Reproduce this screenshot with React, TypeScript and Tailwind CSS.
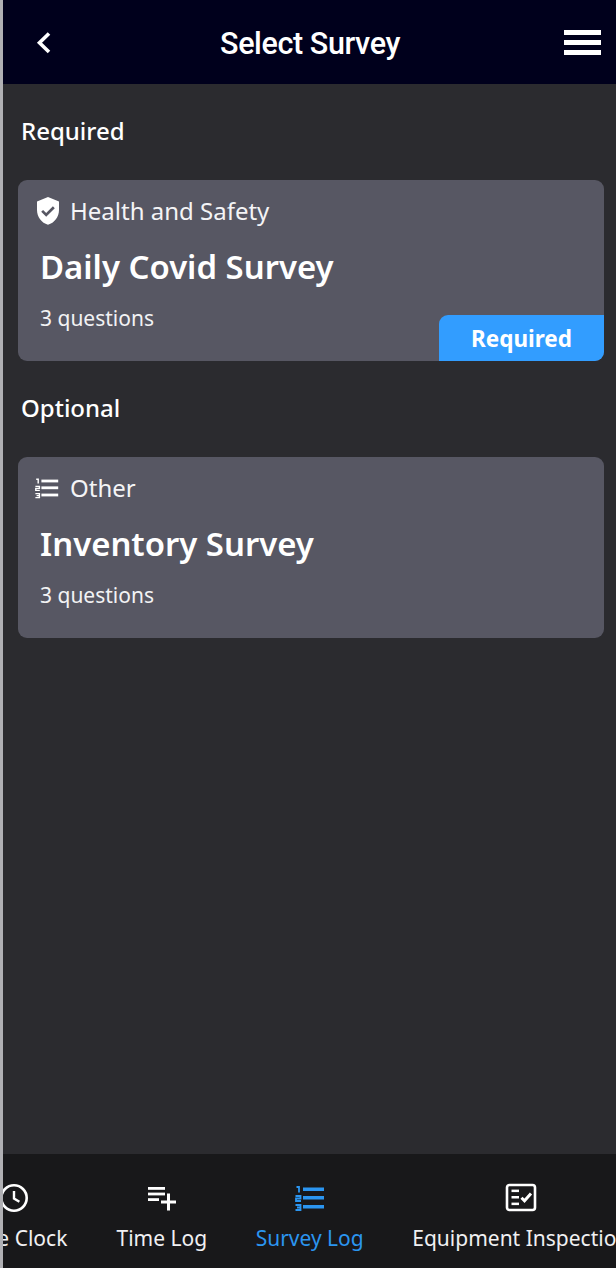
import React from "react";

const sans = "font-['Noto_Sans',sans-serif]";

function ShieldCheck() {
  return (
    <svg width="24" height="30" viewBox="0 0 24 30" className="block">
      <path
        fillRule="evenodd"
        fill="#fff"
        d="M12 1 L1 5.4 V14 C1 21 5.6 26.8 12 28.8 C18.4 26.8 23 21 23 14 V5.4 Z M10.2 20.8 L5.2 15.8 L7.1 13.9 L10.2 17 L16.9 10.3 L18.8 12.2 Z"
      />
    </svg>
  );
}

function NumberedList({ color, size, className }: { color: string; size: number; className?: string }) {
  return (
    <svg width={size} height={size} viewBox="0 0 30 30" className={`block ${className ?? ""}`} fill="none">
      <g fill={color}>
        <rect x="8" y="4.5" width="21" height="3.5" />
        <rect x="8" y="13" width="21" height="3.5" />
        <rect x="8" y="22" width="21" height="3.5" />
      </g>
      <g stroke={color} strokeWidth="1.8">
        <path d="M1.5 4 H4 V9.5" />
        <path d="M0.5 13 H5.5 V15.5 H1 V18 H6" />
        <path d="M0.5 22 H5.5 V27 H0.5 M2 24.5 H5.5" />
      </g>
    </svg>
  );
}

function ClockIcon() {
  return (
    <svg width="30" height="30" viewBox="0 0 30 30" fill="none" stroke="#fff" className="block">
      <circle cx="15" cy="15" r="12.7" strokeWidth="2.6" />
      <path d="M15 8 V15.6 L20.4 18.8" strokeWidth="2.4" />
    </svg>
  );
}

function PlaylistAdd() {
  return (
    <svg width="30" height="30" viewBox="0 0 30 30" fill="#fff" className="block">
      <rect x="1" y="4" width="17" height="2.8" />
      <rect x="1" y="9.6" width="17" height="2.8" />
      <rect x="1" y="15.2" width="11" height="2.8" />
      <rect x="20" y="10.5" width="3" height="17" />
      <rect x="14" y="17.5" width="15" height="3" />
    </svg>
  );
}

function ChecklistBox() {
  return (
    <svg width="32" height="30" viewBox="0 0 32 30" fill="none" className="block">
      <rect x="2" y="2" width="28" height="25" rx="2.5" stroke="#fff" strokeWidth="2.6" />
      <g fill="#fff">
        <rect x="6.5" y="6.6" width="7.5" height="2.5" />
        <rect x="6.5" y="13" width="7.5" height="2.5" />
        <rect x="6.5" y="19.6" width="7.5" height="2.5" />
      </g>
      <path d="M16.5 14.8 L19.5 17.8 L26 10.6" stroke="#fff" strokeWidth="3" />
    </svg>
  );
}

function SurveyCard({
  icon,
  category,
  title,
  badge,
}: {
  icon: React.ReactNode;
  category: string;
  title: string;
  badge?: boolean;
}) {
  return (
    <div className="relative ml-[15px] mr-[12px] h-[181px] overflow-hidden rounded-[9px] bg-[#575763] pl-[22px] pt-[13px] text-white">
      <div className="flex h-[36px] items-center">
        <div className="-ml-[7px] flex w-[30px] items-center justify-center">{icon}</div>
        <span className="ml-[7px] text-[24px] leading-[36px] text-[#f4f4f6]">{category}</span>
      </div>
      <div className="mt-[15px] text-[32.9px] font-semibold leading-[46px]">{title}</div>
      <div className="mt-[13px] text-[21px] leading-[30px] text-[#f2f2f4]">3 questions</div>
      {badge && (
        <div className="absolute bottom-0 right-0 flex h-[46px] w-[165px] items-center justify-center rounded-tl-[9px] bg-[#329dff] pt-[2px] text-[22.5px] font-bold text-white">
          Required
        </div>
      )}
    </div>
  );
}

function NavItem({
  icon,
  label,
  active,
}: {
  icon: React.ReactNode;
  label: string;
  active?: boolean;
}) {
  return (
    <div className="flex shrink-0 flex-col items-center">
      <div className="flex h-[30px] items-center justify-center">{icon}</div>
      <span
        className={`mt-[10px] whitespace-nowrap text-[21px] leading-[30px] ${
          active ? "text-[#2b95f0]" : "text-[#f0f0f2]"
        }`}
      >
        {label}
      </span>
    </div>
  );
}

export default function App() {
  return (
    <div className={`flex h-[1268px] w-[616px] overflow-hidden bg-[#2b2b2f] ${sans}`}>
      <div className="w-[3px] shrink-0 bg-[#b0b0b4]" />
      <div className="flex min-w-0 flex-1 flex-col">
        <header className="flex h-[84px] shrink-0 items-center justify-between bg-[#00001c] pl-[31px] pr-[15px]">
          <svg width="20" height="28" viewBox="0 0 20 28" fill="none" className="block">
            <path d="M15 5.5 L5.5 14.8 L15 24" stroke="#fff" strokeWidth="3.6" />
          </svg>
          <h1 className="relative left-[1px] top-[2px] font-['Roboto',sans-serif] text-[30.5px] font-medium tracking-[-0.4px] text-white">
            Select Survey
          </h1>
          <div className="flex w-[37px] flex-col gap-[5px]">
            <div className="h-[5px] bg-white" />
            <div className="h-[5px] bg-white" />
            <div className="h-[5px] bg-white" />
          </div>
        </header>

        <main className="min-h-0 flex-1 pt-[29px]">
          <h2 className="ml-[18px] text-[24px] font-medium leading-[36px] text-white">Required</h2>
          <div className="mt-[31px]">
            <SurveyCard icon={<ShieldCheck />} category="Health and Safety" title="Daily Covid Survey" badge />
          </div>
          <h2 className="ml-[18px] mt-[29px] text-[24px] font-medium leading-[36px] text-white">Optional</h2>
          <div className="mt-[31px]">
            <SurveyCard
              icon={<NumberedList color="#fff" size={24} className="-translate-x-px" />}
              category="Other"
              title="Inventory Survey"
            />
          </div>
        </main>

        <nav className="flex h-[114px] shrink-0 gap-[48.5px] overflow-hidden bg-[#18181a] pt-[29px]">
          <div className="relative -ml-[43px] flex w-[108px] shrink-0 flex-col items-center">
            <div className="flex h-[30px] items-center justify-center"><ClockIcon /></div>
            <span className="mt-[10px] whitespace-nowrap text-[21px] leading-[30px] text-[#f0f0f2]">Time Clock</span>
          </div>
          <NavItem icon={<PlaylistAdd />} label="Time Log" />
          <NavItem icon={<NumberedList color="#2b95f0" size={30} />} label="Survey Log" active />
          <NavItem icon={<ChecklistBox />} label="Equipment Inspection" />
        </nav>
      </div>
    </div>
  );
}
